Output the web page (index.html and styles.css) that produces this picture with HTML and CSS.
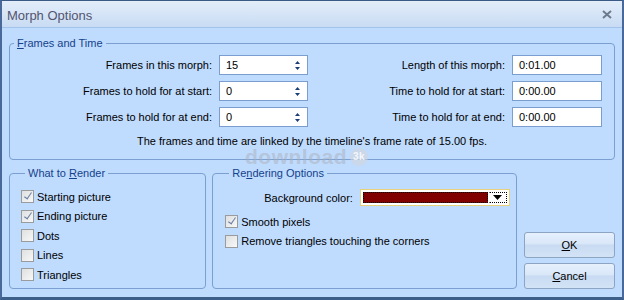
FILE: index.html
```html
<!DOCTYPE html>
<html lang="en">
<head>
  <meta charset="UTF-8">
  <title>Morph Options</title>
  <link rel="stylesheet" href="styles.css">
</head>
<body>
  <div class="window">
    <div class="titlebar">
      <span class="title">Morph Options</span>
      <svg class="close" width="10" height="9" viewBox="0 0 10 9"><path d="M1 1 L9 8 M9 1 L1 8" stroke="#6c7a8e" stroke-width="2"/></svg>
    </div>
    <div class="content">
      <fieldset class="group frames">
        <legend><u>F</u>rames and Time</legend>
        <div class="frames-grid">
          <label>Frames in this morph:</label>
          <div class="spin"><span>15</span><svg width="5" height="9" viewBox="0 0 5 9"><path d="M2.5 0 L5 3 L0 3 Z M0 6 L5 6 L2.5 9 Z" fill="#1b3e78"/></svg></div>
          <label>Length of this morph:</label>
          <div class="field">0:01.00</div>

          <label>Frames to hold for at start:</label>
          <div class="spin"><span>0</span><svg width="5" height="9" viewBox="0 0 5 9"><path d="M2.5 0 L5 3 L0 3 Z M0 6 L5 6 L2.5 9 Z" fill="#1b3e78"/></svg></div>
          <label>Time to hold for at start:</label>
          <div class="field">0:00.00</div>

          <label>Frames to hold for at end:</label>
          <div class="spin"><span>0</span><svg width="5" height="9" viewBox="0 0 5 9"><path d="M2.5 0 L5 3 L0 3 Z M0 6 L5 6 L2.5 9 Z" fill="#1b3e78"/></svg></div>
          <label>Time to hold for at end:</label>
          <div class="field">0:00.00</div>
        </div>
        <p class="note">The frames and time are linked by the timeline's frame rate of 15.00 fps.</p>
      </fieldset>

      <div class="lower">
        <fieldset class="group render">
          <legend>What to <u>R</u>ender</legend>
          <div class="check"><span class="box on"></span>Starting picture</div>
          <div class="check"><span class="box on"></span>Ending picture</div>
          <div class="check"><span class="box"></span>Dots</div>
          <div class="check"><span class="box"></span>Lines</div>
          <div class="check"><span class="box"></span>Triangles</div>
        </fieldset>

        <fieldset class="group options">
          <legend>Re<u>n</u>dering Options</legend>
          <div class="color-row">
            <label>Background color:</label>
            <div class="colorpick">
              <div class="swatch"></div>
              <div class="arrow"><svg width="9" height="5" viewBox="0 0 9 5"><path d="M0 0 L9 0 L4.5 5 Z" fill="#000"/></svg></div>
            </div>
          </div>
          <div class="check"><span class="box on"></span>Smooth pixels</div>
          <div class="check"><span class="box"></span>Remove triangles touching the corners</div>
        </fieldset>

        <div class="buttons">
          <button><u>O</u>K</button>
          <button><u>C</u>ancel</button>
        </div>
      </div>
    </div>
    <div class="watermark">download<span class="badge">3k</span></div>
  </div>
</body>
</html>
```

FILE: styles.css
```css
html, body {
  margin: 0;
  padding: 0;
}

body {
  font-family: "Liberation Sans", Arial, sans-serif;
  font-size: 11px;
  color: #000;
}

.window {
  position: relative;
  width: 624px;
  height: 300px;
  box-sizing: border-box;
  background-color: #bfdbfe;
  border: 1px solid #3b5b87;
  border-bottom: 3px solid #3f5f8b;
  border-left: 2px solid #48699a;
  border-right: 2px solid #48699a;
  display: flex;
  flex-direction: column;
}

.titlebar {
  height: 26px;
  display: flex;
  align-items: center;
  justify-content: space-between;
  padding: 0 10px 0 5px;
  background: linear-gradient(#e3edf9, #d3e3f6 60%, #c8dbf3);
  border-bottom: 1px solid #a3c3ea;
}

.title {
  font-size: 13px;
  color: #545470;
  margin-top: 3px;
}

.close {
  margin-top: 1px;
}

.content {
  flex: 1;
  display: flex;
  flex-direction: column;
  padding: 9px 7px 0 7px;
  gap: 7px;
}

.group {
  margin: 0;
  border: 1px solid #7a9fd0;
  border-radius: 4px;
}

.group legend {
  color: #15428b;
  padding: 0 3px;
  margin-left: 4px;
  line-height: 13px;
}

.frames {
  padding: 5px 11px 11px 0;
}

.frames-grid {
  display: grid;
  grid-template-columns: 202px 89px 190px 90px;
  column-gap: 7px;
  row-gap: 6px;
}

.frames-grid label {
  text-align: right;
  align-self: center;
}

.spin,
.field {
  height: 20px;
  box-sizing: border-box;
  background: #fff;
  border: 1px solid #7a9ed0;
  display: flex;
  align-items: center;
  padding: 0 0 0 6px;
}

.spin {
  justify-content: space-between;
  padding-right: 7px;
}

.note {
  margin: 8px 0 0 0;
  text-align: center;
  padding-left: 11px;
  line-height: 13px;
}

.lower {
  display: flex;
  gap: 6px;
  flex: 1;
  padding-bottom: 8px;
}

.render {
  width: 198px;
  box-sizing: border-box;
  padding: 7px 0 0 11px;
}

.options {
  width: 306px;
  box-sizing: border-box;
  padding: 9px 0 0 12px;
}

.check {
  display: flex;
  align-items: center;
  height: 19.5px;
  white-space: nowrap;
}

.box {
  width: 11px;
  height: 11px;
  border: 1px solid #9a9b9c;
  background: linear-gradient(135deg, #dedfe0, #f8f8f8);
  margin-right: 3px;
  position: relative;
}

.box.on::after {
  content: "";
  position: absolute;
  left: 4px;
  top: 0px;
  width: 3px;
  height: 7px;
  border: solid #6b7fa3;
  border-width: 0 1.5px 1.5px 0;
  transform: rotate(35deg);
}

.color-row {
  display: flex;
  align-items: center;
  gap: 7px;
  padding-left: 39px;
  margin-bottom: 6px;
}

.colorpick {
  width: 150px;
  height: 17px;
  box-sizing: border-box;
  border: 1px solid #e8d17c;
  background: #fff;
  display: flex;
  padding: 2px;
}

.swatch {
  flex: 1;
  background: #800000;
  border: 1px dotted #000;
  margin-right: 1px;
}

.arrow {
  width: 16px;
  display: flex;
  align-items: center;
  justify-content: center;
  border: 1px dotted #000;
  border-left: 1px solid #fff;
}

.buttons {
  flex: 1;
  display: flex;
  flex-direction: column;
  justify-content: flex-end;
  gap: 5px;
  padding-left: 1px;
}

.buttons button {
  width: 91px;
  height: 26px;
  font-family: inherit;
  font-size: 11px;
  color: #000;
  border: 1px solid #8da4c2;
  border-radius: 3px;
  background: linear-gradient(#e6f0fd, #d9e7f8 45%, #c8dbf2 50%, #d3e3f6);
  padding: 0;
}

.watermark {
  position: absolute;
  left: 243px;
  top: 147px;
  height: 18px;
  font-size: 21px;
  line-height: 16px;
  font-weight: bold;
  color: rgba(170, 176, 186, 0.5);
  letter-spacing: 0.5px;
  display: flex;
  align-items: center;
}

.badge {
  display: inline-flex;
  align-items: center;
  justify-content: center;
  width: 18px;
  height: 18px;
  margin-left: 3px;
  border-radius: 50%;
  background: rgba(210, 214, 220, 0.6);
  color: rgba(255, 255, 255, 0.8);
  font-size: 10px;
}
```
